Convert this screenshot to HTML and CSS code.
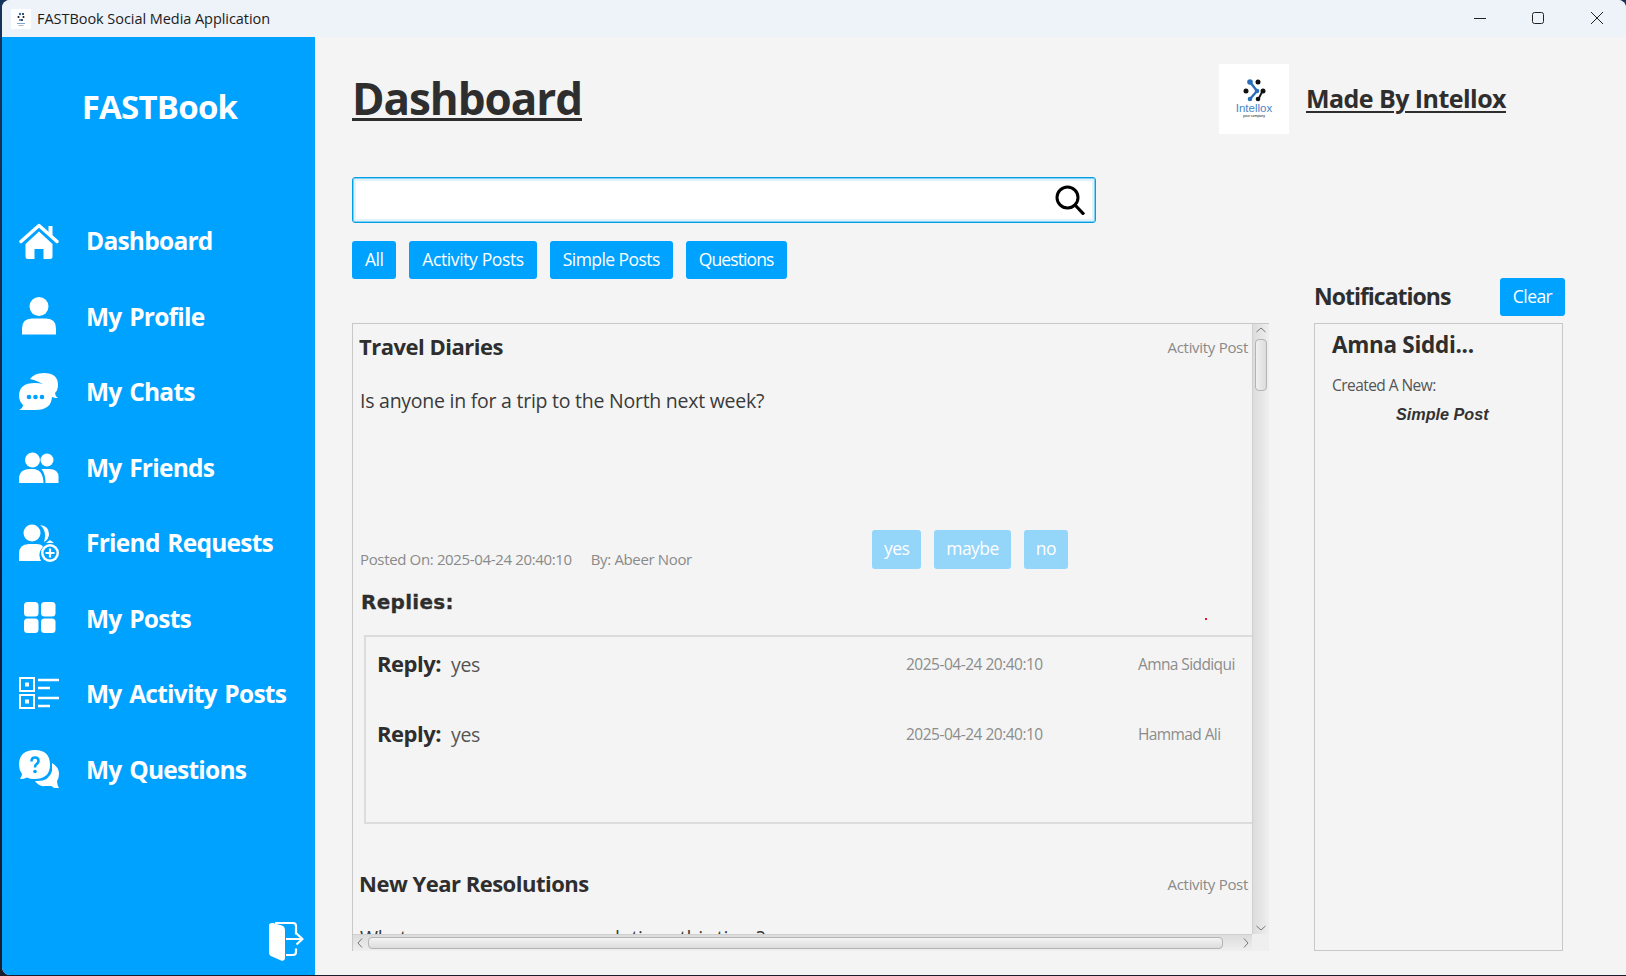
FILE: index.html
```html
<!DOCTYPE html>
<html lang="en">
<head>
<meta charset="utf-8">
<title>FASTBook Social Media Application</title>
<link rel="stylesheet" href="styles.css">
</head>
<body>
<div class="window">
  <header class="titlebar">
    <div class="app-icon">
      <svg viewBox="0 0 20 20" width="20" height="20"><circle cx="9" cy="5" r="1.2" fill="#2a6fb8"/><circle cx="12" cy="5" r="1" fill="#111"/><circle cx="7.5" cy="8" r="1" fill="#111"/><circle cx="12.5" cy="8" r="1" fill="#111"/><circle cx="9" cy="11" r="1" fill="#2a6fb8"/><circle cx="11" cy="11" r="1" fill="#111"/><rect x="6" y="14" width="8" height="1" fill="#7aa6d4"/><rect x="7.5" y="16" width="5" height=".7" fill="#999"/></svg>
    </div>
    <span class="app-title">FASTBook Social Media Application</span>
    <div class="win-controls">
      <svg class="wc" viewBox="0 0 14 14"><path d="M0 7.500H12" stroke="#222" fill="none"/></svg>
      <svg class="wc" viewBox="0 0 14 14"><rect x="0.500" y="1.500" width="11" height="11" rx="2" stroke="#222" fill="none"/></svg>
      <svg class="wc" viewBox="0 0 14 14"><path d="M1 1L13 13M13 1L1 13" stroke="#222" fill="none"/></svg>
    </div>
  </header>
  <div class="app">
    <aside class="sidebar">
      <div class="brand">FASTBook</div>
      <nav class="nav">
        <a class="nav-item"><svg class="nav-icon" viewBox="0 0 40 40"><path d="M2 20.500L20 4.500L38 20.500" fill="none" stroke="#fff" stroke-width="3.400" stroke-linecap="round" stroke-linejoin="round"/><path d="M29.500 5H33.500V15H29.500z" fill="#fff"/><path d="M6.500 23L20 10.500L33.500 23V35.500Q33.500 38 31 38H24.500V28H15.500V38H9Q6.500 38 6.500 35.500z" fill="#fff"/></svg><span class="nav-label">Dashboard</span></a>
        <a class="nav-item"><svg class="nav-icon" viewBox="0 0 40 40"><circle cx="20" cy="10.500" r="9.500" fill="#fff"/><path d="M3 38.500V32.500Q3 22.500 13 22.500H27Q37 22.500 37 32.500V38.500z" fill="#fff"/></svg><span class="nav-label">My Profile</span></a>
        <a class="nav-item"><svg class="nav-icon" viewBox="0 0 40 40"><path d="M11 7Q15 1 25 1Q39 1 39 13Q39 18 36 21Q36 24 39 26Q34 26 32 24Q31 12 11 7z" fill="#fff"/><path d="M0 38Q4 36 4 33Q0 29 0 24Q0 11 16 11Q33 11 33 24Q33 38 16 38z" fill="#fff"/><circle cx="10" cy="25" r="2.300" fill="#00a2ff"/><circle cx="16.500" cy="25" r="2.300" fill="#00a2ff"/><circle cx="23" cy="25" r="2.300" fill="#00a2ff"/></svg><span class="nav-label">My Chats</span></a>
        <a class="nav-item"><svg class="nav-icon" viewBox="0 0 40 40"><circle cx="13.500" cy="13" r="7.500" fill="#fff"/><circle cx="28" cy="13" r="6.500" fill="#fff"/><path d="M0 36V32Q0 22 11 22H14Q24 22 24.500 36z" fill="#fff"/><path d="M26.500 36Q26.500 27 22.500 22H30Q39.500 22 39.500 30V36z" fill="#fff"/></svg><span class="nav-label">My Friends</span></a>
        <a class="nav-item"><svg class="nav-icon" viewBox="0 0 40 40"><circle cx="13" cy="10" r="8.500" fill="#fff"/><path d="M21 2Q30 3 30 11Q30 16 25 19Q27 12 25 7Q24 4 21 2z" fill="#fff"/><path d="M27 20L31 17L35 20z" fill="#fff"/><path d="M0 38V31Q0 21 10 21H17Q23 21 24 24Q20 28 20.500 33Q21 36 22 38z" fill="#fff"/><circle cx="31" cy="30" r="9" fill="#fff"/><circle cx="31" cy="30" r="6.500" fill="#00a2ff"/><path d="M31 25.500V34.500M26.500 30H35.500" stroke="#fff" stroke-width="2.200"/></svg><span class="nav-label">Friend Requests</span></a>
        <a class="nav-item"><svg class="nav-icon" viewBox="0 0 40 40"><rect x="5" y="4" width="14.500" height="14.500" rx="3.500" fill="#fff"/><rect x="22" y="4" width="14.500" height="14.500" rx="3.500" fill="#fff"/><rect x="5" y="20.500" width="14.500" height="14.500" rx="3.500" fill="#fff"/><rect x="22" y="20.500" width="14.500" height="14.500" rx="3.500" fill="#fff"/></svg><span class="nav-label">My Posts</span></a>
        <a class="nav-item"><svg class="nav-icon" viewBox="0 0 40 40"><g fill="none" stroke="#fff" stroke-width="2"><rect x="1" y="4" width="14" height="13"/><rect x="1" y="21" width="14" height="13"/></g><rect x="6" y="8.500" width="4" height="4" fill="#fff"/><rect x="6" y="25.500" width="4" height="4" fill="#fff"/><path d="M19 6H40M19 14H31M19 24H40M19 32H31" stroke="#fff" stroke-width="2.600"/></svg><span class="nav-label">My Activity Posts</span></a>
        <a class="nav-item"><svg class="nav-icon" viewBox="0 0 40 40"><path d="M1 30Q3 27 3 25Q0 21 0 16Q0 1 16 1Q31 1 31 16Q31 30 15 30Q11 30 8 28.500Q5 30 1 30z" fill="#fff"/><path d="M33 14Q40 18 40 25Q40 29 38 32Q38 36 40 39H35Q33 37 32 37H26Q20 38 16 32Q30 33 33 22z" fill="#fff"/><path d="M12.500 12.500Q12.500 8.500 16 8.500Q19.500 8.500 19.500 11.800Q19.500 14 17.500 15.200Q16 16.200 16 18.500" fill="none" stroke="#00a2ff" stroke-width="2.600"/><circle cx="16" cy="22.500" r="1.800" fill="#00a2ff"/></svg><span class="nav-label">My Questions</span></a>
      </nav>
      <div class="logout">
        <svg class="logout-icon" viewBox="0 0 36 40"><path d="M1 4Q1 1 5 1.500L14 4Q17 5 17 9V36Q17 40 13 39L4 35Q1 34 1 31z" fill="#fff"/><path d="M7 1.500H25Q28 1.500 28 4.500V13M28 27V30.500Q28 33.500 25 33.500H18M18 17.500H34M28.500 12L34.500 17.500L28.500 23" fill="none" stroke="#fff" stroke-width="2.200" stroke-linejoin="round"/></svg>
      </div>
    </aside>
    <main class="main">
      <div class="top">
        <h1 class="page-title">Dashboard</h1>
        <div class="credit">
          <div class="logo">
            <svg viewBox="0 0 70 70" width="70" height="70">
              <path d="M31 18L38 27L31 35" fill="none" stroke="#2a6fb8" stroke-width="2.400"/>
              <circle cx="31" cy="18" r="2.800" fill="#2a6fb8"/><circle cx="39" cy="18" r="2.500" fill="#111"/><circle cx="27" cy="27" r="2.500" fill="#111"/><circle cx="38" cy="27" r="2.300" fill="#2a6fb8"/><circle cx="44" cy="27" r="2.500" fill="#111"/><circle cx="31" cy="35" r="2.300" fill="#2a6fb8"/><circle cx="39" cy="35" r="2.300" fill="#111"/>
              <path d="M40 34L43 28" stroke="#111" stroke-width="1.800"/>
              <text x="35" y="48" class="logo-name" text-anchor="middle">Intellox</text>
              <text x="35" y="53" class="logo-tag" text-anchor="middle">your company</text>
            </svg>
          </div>
          <span class="credit-text">Made By Intellox</span>
        </div>
      </div>
      <div class="columns">
        <section class="feed">
          <div class="search">
            <svg class="search-icon" viewBox="0 0 30 30"><circle cx="12.500" cy="12.500" r="10.500" fill="none" stroke="#000" stroke-width="3"/><path d="M20.500 20.500L29 29.500" stroke="#000" stroke-width="3.200"/></svg>
          </div>
          <div class="filters">
            <button class="btn">All</button>
            <button class="btn btn-wide">Activity Posts</button>
            <button class="btn">Simple Posts</button>
            <button class="btn btn-tight">Questions</button>
          </div>
          <div class="list">
            <div class="list-view">
              <article class="post">
                <div class="post-head"><h2 class="post-title">Travel Diaries</h2><span class="post-type">Activity Post</span></div>
                <p class="post-body">Is anyone in for a trip to the North next week?</p>
                <div class="post-foot">
                  <div class="post-meta"><span class="meta-date">Posted On: 2025-04-24 20:40:10</span><span>By: Abeer Noor</span></div>
                  <div class="answers">
                    <button class="btn btn-off">yes</button>
                    <button class="btn btn-off">maybe</button>
                    <button class="btn btn-off">no</button>
                  </div>
                </div>
                <h3 class="replies-title">Replies:</h3>
                <span class="red-dot"></span>
                <div class="replies">
                  <div class="reply"><b class="reply-label">Reply:</b><span class="reply-text">yes</span><span class="reply-date">2025-04-24 20:40:10</span><span class="reply-name">Amna Siddiqui</span></div>
                  <div class="reply"><b class="reply-label">Reply:</b><span class="reply-text">yes</span><span class="reply-date">2025-04-24 20:40:10</span><span class="reply-name">Hammad Ali</span></div>
                </div>
              </article>
              <article class="post post-next">
                <div class="post-head"><h2 class="post-title">New Year Resolutions</h2><span class="post-type">Activity Post</span></div>
                <p class="post-body">What are your new year resolutions this time?</p>
              </article>
            </div>
            <div class="vbar">
              <svg class="arrow" viewBox="0 0 16 10"><path d="M3.500 7L8 3L12.500 7" fill="none" stroke="#777"/></svg>
              <div class="vthumb"></div>
              <svg class="arrow arrow-end" viewBox="0 0 16 10"><path d="M3.500 3L8 7L12.500 3" fill="none" stroke="#777"/></svg>
            </div>
            <div class="hbar">
              <svg class="arrow-h" viewBox="0 0 10 16"><path d="M7 3.500L3 8L7 12.500" fill="none" stroke="#777"/></svg>
              <div class="hthumb"></div>
              <svg class="arrow-h" viewBox="0 0 10 16"><path d="M3 3.500L7 8L3 12.500" fill="none" stroke="#777"/></svg>
            </div>
            <div class="corner"></div>
          </div>
        </section>
        <section class="notes">
          <div class="notes-head">
            <h2 class="notes-title">Notifications</h2>
            <button class="btn btn-clear">Clear</button>
          </div>
          <div class="notes-panel">
            <div class="note-name">Amna Siddi...</div>
            <div class="note-line">Created A New:</div>
            <div class="note-kind">Simple Post</div>
          </div>
        </section>
      </div>
    </main>
  </div>
</div>
</body>
</html>
```

FILE: styles.css
```css
* { box-sizing: border-box; }
html, body { margin: 0; padding: 0; }
body {
  width: 1626px;
  height: 976px;
  overflow: hidden;
  background: linear-gradient(#16335a 0, #1a2a4c 30%, #121a3c 60%, #1b1d2f 100%);
  font-family: "Open Sans", "Noto Sans", sans-serif;
  color: #333;
}
h1, h2, h3, p { margin: 0; }
.window {
  margin-left: 2px;
  height: 975px;
  display: flex;
  flex-direction: column;
  border-radius: 8px 8px 0 8px;
  overflow: hidden;
  background: #f4f4f4;
}
.titlebar {
  height: 37px;
  flex: none;
  background: #eef2f9;
  display: flex;
  align-items: center;
  padding-left: 9px;
}
.app-icon { width: 20px; height: 20px; background: #fff; display: flex; }
.app-title { margin-left: 6px; font-size: 14.500px; letter-spacing: -0.05px; color: #1c1c1c; }
.win-controls { margin-left: auto; display: flex; align-items: center; gap: 44px; height: 100%; padding: 0 22px 2px 0; }
.wc { width: 14px; height: 14px; display: block; }
.app { flex: 1; display: flex; min-height: 0; }
.sidebar {
  width: 313px;
  flex: none;
  background: #00a2ff;
  display: flex;
  flex-direction: column;
  color: #fff;
}
.brand {
  height: 166px;
  padding-top: 47px;
  padding-left: 2px;
  text-align: center;
  font-size: 33px;
  line-height: 46px;
  font-weight: 700;
  letter-spacing: -0.75px;
}
.nav { display: flex; flex-direction: column; }
.nav-item {
  height: 75.5px;
  display: flex;
  align-items: center;
  padding-left: 17px;
  gap: 27px;
  font-size: 24.500px;
  font-weight: 700;
  letter-spacing: -0.75px;
  word-spacing: 2px;
}
.nav-icon { width: 40px; height: 40px; flex: none; }
.logout { margin-top: auto; display: flex; justify-content: flex-end; padding: 0 11px 13px 0; }
.logout-icon { width: 36px; height: 41px; display: block; }
.main { flex: 1; min-width: 0; padding-left: 37px; }
.top {
  height: 140px;
  padding-top: 26px;
  display: flex;
  align-items: flex-start;
}
.page-title {
  width: 867px;
  line-height: 70px;
  font-size: 44px;
  font-weight: 700;
  letter-spacing: -1.05px;
  color: #2e2e2e;
  text-decoration: underline;
  text-decoration-thickness: 3px;
  text-underline-offset: 3px;
}
.credit { display: flex; align-items: center; gap: 17px; padding-top: 1px; }
.logo { width: 70px; height: 70px; background: #fff; }
.logo-name { font: 11.500px "Liberation Sans", sans-serif; fill: #4a86c4; }
.logo-tag { font: 3.500px "Liberation Sans", sans-serif; fill: #111; }
.credit-text {
  padding-bottom: 2px;
  font-size: 25px;
  font-weight: 700;
  letter-spacing: -0.55px;
  color: #2e2e2e;
  text-decoration: underline;
  text-decoration-thickness: 2px;
  text-underline-offset: 3px;
}
.columns { display: flex; }
.feed { width: 917px; flex: none; }
.search {
  width: 744px;
  height: 46px;
  background: #fff;
  border: 1px solid #00a0e6;
  border-radius: 3px;
  box-shadow: inset 0 0 0 1px #7fcff2, inset 0 0 0 3px #e2f1fa;
  display: flex;
  align-items: center;
  justify-content: flex-end;
  padding-right: 10px;
}
.search-icon { width: 30px; height: 30px; display: block; }
.filters { display: flex; gap: 13px; margin-top: 18px; margin-bottom: 44px; }
.btn {
  height: 38px;
  border: 0;
  border-radius: 3px;
  background: #00a2ff;
  color: #fff;
  font: 400 17.500px/36px "Open Sans", "Noto Sans", sans-serif;
  letter-spacing: -0.55px;
  padding: 0 13px 2px;
}
.btn-tight { letter-spacing: -0.9px; }
.btn-wide { letter-spacing: -0.38px; }
.list {
  height: 628px;
  border: 1px solid #c8c8c8;
  display: grid;
  grid-template-columns: 899px 1fr;
  grid-template-rows: 610px 1fr;
}
.list-view { overflow: hidden; }
.post { position: relative; padding: 0 0 0 7px; }
.post-head { height: 44px; display: flex; align-items: center; justify-content: space-between; padding-right: 4px; }
.post-title { margin-left: -1px; font-size: 22px; font-weight: 700; letter-spacing: -0.5px; color: #2e2e2e; }
.post-type { padding-top: 2px; font-size: 15px; letter-spacing: -0.3px; color: #8a8a8a; }
.post-body { margin-top: 18px; font-size: 19.500px; line-height: 30px; letter-spacing: -0.25px; color: #3a3a3a; white-space: nowrap; }
.post-foot { margin-top: 114px; display: flex; align-items: flex-end; height: 39px; }
.post-meta { width: 512px; font-size: 15px; line-height: 20px; letter-spacing: -0.35px; color: #8a8a8a; display: flex; }
.meta-date { margin-right: 19px; }
.answers { display: flex; gap: 13px; }
.btn-off { background: #94d5fa; height: 39px; line-height: 37px; padding: 0 12px 2px; }
.replies-title {
  margin-top: 22px;
  margin-left: 1px;
  font: 700 20px/22px "DejaVu Sans", sans-serif;
  letter-spacing: 0.3px;
  color: #2e2e2e;
  -webkit-text-stroke: 0.3px #2e2e2e;
}
.red-dot { position: absolute; left: 852px; top: 294px; width: 2px; height: 2px; background: #e8102a; }
.replies {
  margin: 22px -30px 0 4px;
  height: 189px;
  border: 2px solid #dcdcdc;
  padding: 7px 0 0 11px;
  display: flex;
  flex-direction: column;
  gap: 30px;
}
.reply { height: 40px; display: grid; grid-template-columns: 74px 455px 232px auto; align-items: center; }
.reply-label { padding-bottom: 3px; font-size: 22px; font-weight: 700; letter-spacing: -0.5px; color: #2e2e2e; }
.reply-text { font-size: 19.500px; letter-spacing: -0.3px; color: #555; }
.reply-date { font-size: 15.500px; letter-spacing: -0.5px; color: #8c8c8c; }
.reply-name { font-size: 15.500px; letter-spacing: -0.6px; color: #8c8c8c; }
.post-next { margin-top: 37px; }
.vbar {
  background: linear-gradient(90deg, #dcdcdc, #efefef);
  border-left: 1px solid #d0d0d0;
  display: flex;
  flex-direction: column;
  align-items: center;
}
.arrow { width: 16px; height: 10px; display: block; margin-top: 1px; flex: none; }
.arrow-end { margin-top: auto; margin-bottom: 1px; }
.vthumb {
  width: 12px;
  height: 52px;
  margin-top: 4px;
  border: 1px solid #b4b4b4;
  border-radius: 4px;
  background: linear-gradient(90deg, #f0f0f0, #dcdcdc);
}
.hbar {
  background: linear-gradient(#dcdcdc, #efefef);
  border-top: 1px solid #d0d0d0;
  display: flex;
  align-items: center;
  padding-left: 2px;
}
.arrow-h { width: 10px; height: 16px; flex: none; display: block; }
.hthumb {
  width: 855px;
  flex: none;
  height: 12px;
  margin: 0 18px 0 3px;
  border: 1px solid #b4b4b4;
  border-radius: 4px;
  background: linear-gradient(#f4f4f4, #dcdcdc);
}
.corner { background: #efefef; }
.notes { margin-left: 45px; width: 251px; flex: none; padding-top: 101px; }
.notes-head { height: 38px; display: flex; align-items: center; justify-content: space-between; margin-bottom: 7px; }
.notes-title { padding-bottom: 2px; font-size: 23px; font-weight: 700; letter-spacing: -1px; color: #2e2e2e; }
.btn-clear { height: 38px; width: 65px; padding: 0 0 2px; text-align: center; }
.notes-panel { width: 249px; height: 628px; border: 1px solid #c8c8c8; padding: 0 0 0 17px; }
.note-name { margin-top: 3px; height: 36px; line-height: 36px; font-size: 22.500px; font-weight: 700; letter-spacing: -0.3px; color: #2e2e2e; }
.note-line { margin-top: 10px; font-size: 15.500px; line-height: 24px; letter-spacing: -0.55px; color: #555; }
.note-kind { margin: 5px 0 0 64px; font: italic 700 16.200px/24px "Liberation Sans", sans-serif; color: #333; }
```
